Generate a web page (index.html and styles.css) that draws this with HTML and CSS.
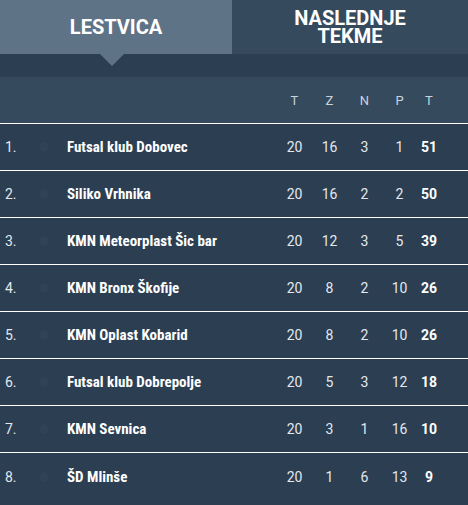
FILE: index.html
```html
<!DOCTYPE html>
<html>
<head>
<meta charset="utf-8">
<link rel="stylesheet" href="styles.css">
</head>
<body>
<div class="widget">
  <div class="tabs">
    <div class="tab active">LESTVICA</div>
    <div class="tab">NASLEDNJE<br>TEKME</div>
  </div>
  <div class="band"></div>
  <div class="head">
    <span class="rank"></span><span class="dot hidden"></span><span class="name"></span>
    <span class="c">T</span><span class="c">Z</span><span class="c">N</span><span class="c">P</span><span class="c last">T</span>
  </div>
  <div class="row"><span class="rank">1.</span><span class="dot"></span><span class="name">Futsal klub Dobovec</span><span class="c">20</span><span class="c">16</span><span class="c">3</span><span class="c">1</span><span class="c last pts">51</span></div>
  <div class="row"><span class="rank">2.</span><span class="dot"></span><span class="name">Siliko Vrhnika</span><span class="c">20</span><span class="c">16</span><span class="c">2</span><span class="c">2</span><span class="c last pts">50</span></div>
  <div class="row"><span class="rank">3.</span><span class="dot"></span><span class="name">KMN Meteorplast Šic bar</span><span class="c">20</span><span class="c">12</span><span class="c">3</span><span class="c">5</span><span class="c last pts">39</span></div>
  <div class="row"><span class="rank">4.</span><span class="dot"></span><span class="name">KMN Bronx Škofije</span><span class="c">20</span><span class="c">8</span><span class="c">2</span><span class="c">10</span><span class="c last pts">26</span></div>
  <div class="row"><span class="rank">5.</span><span class="dot"></span><span class="name">KMN Oplast Kobarid</span><span class="c">20</span><span class="c">8</span><span class="c">2</span><span class="c">10</span><span class="c last pts">26</span></div>
  <div class="row"><span class="rank">6.</span><span class="dot"></span><span class="name">Futsal klub Dobrepolje</span><span class="c">20</span><span class="c">5</span><span class="c">3</span><span class="c">12</span><span class="c last pts">18</span></div>
  <div class="row"><span class="rank">7.</span><span class="dot"></span><span class="name">KMN Sevnica</span><span class="c">20</span><span class="c">3</span><span class="c">1</span><span class="c">16</span><span class="c last pts">10</span></div>
  <div class="row"><span class="rank">8.</span><span class="dot"></span><span class="name">ŠD Mlinše</span><span class="c">20</span><span class="c">1</span><span class="c">6</span><span class="c">13</span><span class="c last pts">9</span></div>
</div>
</body>
</html>
```
FILE: styles.css
```css
* { box-sizing: border-box; }
html, body { margin: 0; padding: 0; }
body {
  background: #2b3e52;
  font-family: Roboto, "Liberation Sans", sans-serif;
  width: 468px;
  height: 505px;
  overflow: hidden;
}
.widget { width: 468px; background: #2b3e52; }
.tabs { display: flex; height: 54px; }
.tab {
  flex: 1;
  display: flex;
  align-items: center;
  justify-content: center;
  text-align: center;
  color: #ffffff;
  font-weight: 700;
  font-size: 20px;
  line-height: 18px;
  background: #364a5e;
  position: relative;
}
.tab.active { background: #5f7387; flex: 0 0 232px; }
.tab.active::after {
  content: "";
  position: absolute;
  left: 100px;
  top: 54px;
  border-left: 12px solid transparent;
  border-right: 12px solid transparent;
  border-top: 12px solid #5f7387;
}
.band { height: 23px; background: #2b3e52; }
.head, .row {
  display: flex;
  align-items: center;
  padding: 0 27px 0 5px;
}
.head {
  height: 47px;
  background: #364a5e;
  border-bottom: 1px solid #ffffff;
  color: #c9d3dd;
  font-size: 13px;
}
.row {
  height: 47px;
  border-bottom: 1px solid #ffffff;
  color: #e3e8ee;
  font-size: 14px;
}
.row:last-child { border-bottom: none; }
.rank { flex: 0 0 34px; }
.dot {
  flex: 0 0 10px;
  height: 10px;
  border-radius: 50%;
  background: #2f4357;
}
.dot.hidden { background: transparent; }
.name {
  flex: 1;
  margin-left: 18px;
  font-family: "Roboto Condensed", "Liberation Sans Narrow", Roboto, sans-serif;
  font-weight: 700;
  color: #ffffff;
  font-size: 15px;
}
.c { flex: 0 0 35px; text-align: center; }
.c.last { flex: 0 0 24px; }
.pts { font-weight: 700; color: #ffffff; }
```
